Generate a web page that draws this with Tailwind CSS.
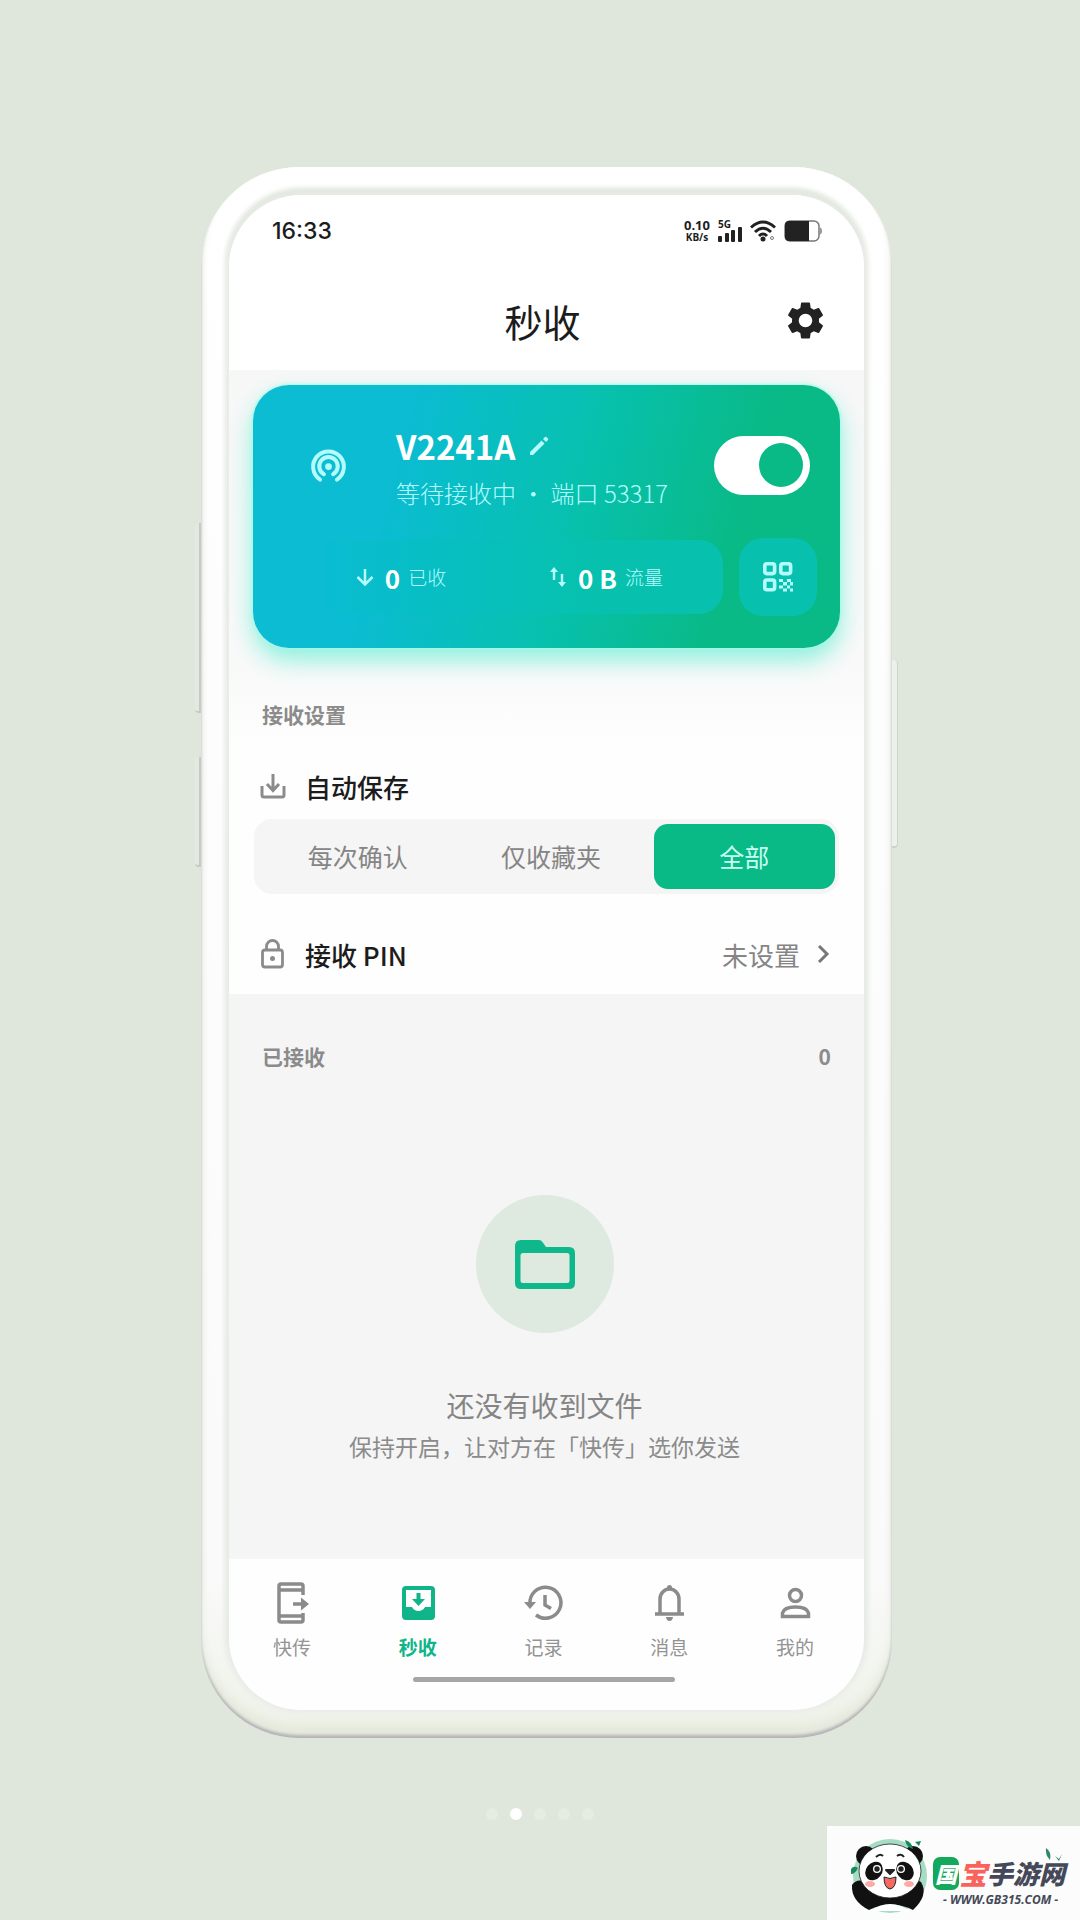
<!DOCTYPE html>
<html lang="zh-CN">
<head>
  <meta charset="UTF-8" />
  <meta name="viewport" content="width=device-width, initial-scale=1.0" />
  <title>秒收</title>
  <script src="https://cdn.jsdelivr.net/npm/@tailwindcss/browser@4"></script>
</head>
<body class="bg-[#dfe6dc] font-['Noto_Sans_CJK_SC',sans-serif] text-[#1c1c1c]">
  <div class="relative min-h-screen flex flex-col items-center pt-[167px] pl-[13px]">

    <!-- phone frame -->
    <div class="relative w-full max-w-[691px]">
      <div class="absolute -left-[6px] top-[356px] w-3 h-[190px] rounded-l bg-[#e3e9e1] border-b-2 border-r-8 border-[#c5cbc4]"></div>
      <div class="absolute -left-[6px] top-[590px] w-3 h-[110px] rounded-l bg-[#e3e9e1] border-b-2 border-r-8 border-[#c5cbc4]"></div>
      <div class="absolute -right-[6px] top-[493px] w-3 h-[188px] rounded-r bg-[#edf1eb] border-b-2 border-r border-[#cdd3cb]"></div>

      <div class="relative rounded-[98px] p-7 bg-linear-to-b from-white via-[#fafafa] via-90% to-[#edf1e6] shadow-[inset_0_-3px_3px_#b4b3b8,inset_0_-12px_10px_#e4e9dc,inset_0_2px_4px_#ffffff]">
        <div class="rounded-[72px] overflow-hidden bg-[#f5f5f5] shadow-[0_0_7px_2px_#ececec,0_-4px_5px_3px_#dde6d9]">

          <!-- status bar -->
          <header class="bg-white">
            <div class="flex items-center justify-between h-[81px] pb-[9px] pl-[43px] pr-[42px]">
              <span class="font-[Inter] font-medium text-[23px]">16:33</span>
              <div class="flex items-center gap-2 font-['Open_Sans',sans-serif] font-bold">
                <div class="text-center">
                  <div class="text-[13px] leading-[12px]">0.10</div>
                  <div class="text-[10px] leading-[12px]">KB/s</div>
                </div>
                <div class="flex flex-col">
                  <span class="text-[10px] leading-[8px]">5G</span>
                  <svg class="w-6 h-[15px] -mt-px" viewBox="0 7 24 15" fill="#222">
                    <rect x="0" y="16" width="4" height="6" rx="1" />
                    <rect x="7" y="13" width="4" height="9" rx="1" />
                    <rect x="13" y="10" width="4" height="12" rx="1" />
                    <rect x="20" y="7" width="4" height="15" rx="1" />
                  </svg>
                </div>
                <svg class="w-[26px] h-[22px]" viewBox="0 0 26 22" fill="none" stroke="#222" stroke-width="3">
                  <path d="M1 7.500Q13-3.500 25 7.500M5 12Q13 4.500 21 12M9 16Q13 12 17 16" />
                  <circle cx="13" cy="19" r="2.500" fill="#222" stroke="none" />
                  <circle cx="22" cy="18" r="1.500" stroke="#777" stroke-width="1" />
                </svg>
                <svg class="w-[38px] h-[22px]" viewBox="0 0 38 22">
                  <rect x="1" y="1" width="34" height="20" rx="5" fill="#fff" stroke="#777" stroke-width="1.500" />
                  <path d="M5 1H25V21H5Q1 21 1 17V5Q1 1 5 1Z" fill="#222" />
                  <path d="M36 8Q38 11 36 14" fill="none" stroke="#999" stroke-width="2" />
                </svg>
              </div>
            </div>

            <div class="grid grid-cols-[1fr_auto_1fr] items-center h-[94px] pl-7 pr-9 pb-[6px]">
              <span></span>
              <h1 class="text-[38px]">秒收</h1>
              <button aria-label="设置" class="justify-self-end">
                <svg class="size-[45px]" viewBox="0 0 24 24" fill="#222"><path d="M19.140 12.940c.04-.3.060-.61.060-.94 0-.32-.02-.64-.07-.94l2.030-1.580c.18-.14.230-.41.120-.61l-1.920-3.320c-.12-.22-.37-.29-.59-.22l-2.390.96c-.5-.38-1.030-.7-1.620-.94l-.36-2.540c-.04-.24-.24-.41-.48-.41h-3.840c-.24 0-.43.170-.47.410l-.36 2.540c-.59.240-1.130.570-1.620.940l-2.390-.96c-.22-.08-.47 0-.59.220L2.740 8.870c-.12.210-.08.470.120.610l2.030 1.580c-.05.3-.09.630-.09.940s.02.640.070.940l-2.030 1.580c-.18.140-.23.410-.12.610l1.920 3.320c.12.220.37.290.59.220l2.390-.96c.5.380 1.030.7 1.620.940l.36 2.540c.05.240.24.410.48.410h3.840c.24 0 .44-.17.470-.41l.36-2.540c.59-.24 1.130-.56 1.620-.94l2.390.96c.22.080.47 0 .59-.22l1.920-3.320c.12-.22.070-.47-.12-.61l-2.010-1.580zM12 15.600c-1.980 0-3.600-1.620-3.600-3.600s1.620-3.600 3.600-3.600 3.600 1.620 3.600 3.600-1.620 3.600-3.600 3.600z" /></svg>
              </button>
            </div>
          </header>

          <main>
            <div class="bg-linear-to-b from-[#f7f7f7] via-[#f9f9f9] via-80% to-[#fefefe] px-6 pt-[15px] pb-4">
              <!-- receiver card -->
              <section class="h-[263px] rounded-[36px] bg-linear-[105deg] from-[#0bbcd2] from-25% via-[#07c1ae] via-54% to-[#09b986] to-80% pt-[42px] pl-6 pr-[23px] text-white shadow-[0_0_3px_1px_#a5fbec,0_12px_24px_#8af0dc]">
                <div class="flex items-center h-[76px]">
                  <svg class="w-[103px] h-10" viewBox="-32 -1 64 26" fill="none" stroke="#b5fcff" stroke-width="2.600" stroke-linecap="round">
                    <path d="M-5.500 21.500A10 10 0 1 1 5.500 21.500M-3 18A6 6 0 1 1 3 18" />
                    <circle cx="0" cy="13" r="2.200" fill="#b5fcff" stroke="none" />
                  </svg>
                  <div class="flex-1 pl-4 pt-3">
                    <div class="flex items-center gap-3">
                      <h2 class="text-[33px] leading-[44px] font-bold">V2241A</h2>
                      <button aria-label="编辑名称">
                        <svg class="size-6" viewBox="0 0 24 24" fill="#b5fcff"><path d="M3 18V21h3L17.500 9.500 14.500 6.500zM16 5 19 8 21 6a1 1 0 0 0 0-1.400L19.400 3a1 1 0 0 0-1.400 0z" /></svg>
                      </button>
                    </div>
                    <p class="text-2xl leading-[50px] font-light text-[#b5fcff]">等待接收中 ・ 端口 53317</p>
                  </div>
                  <label class="shrink-0 mr-[7px]">
                    <input type="checkbox" checked aria-label="接收开关" class="peer sr-only" />
                    <span class="flex items-center w-24 h-[59px] rounded-full bg-white/40 p-[7px] peer-checked:bg-white peer-checked:justify-end">
                      <span class="size-11 rounded-full bg-[#09b986]"></span>
                    </span>
                  </label>
                </div>

                <div class="flex items-center gap-4 mt-[35px]">
                  <div class="flex-1 grid grid-cols-2 items-center h-[74px] rounded-3xl bg-linear-to-r from-[#0bbcd2] from-10% to-[#07c1ae] to-70% pl-5 pr-4">
                    <div class="flex items-center justify-center gap-2">
                      <svg class="size-6" viewBox="0 0 24 24" fill="none" stroke="#b5fcff" stroke-width="2.500"><path d="M12 4V19M4.500 12 12 19.500 19.500 12" /></svg>
                      <b class="text-[26px]">0</b>
                      <span class="text-[19px] font-light text-[#b5fcff]">已收</span>
                    </div>
                    <div class="flex items-center justify-center gap-2">
                      <svg class="size-6" viewBox="0 0 24 24" fill="#b5fcff"><path d="M8 2 12 7H9.200V15H6.800V7H4zM16 22 20 17H17.200V9H14.800V17H12z" /></svg>
                      <b class="text-[26px]">0 B</b>
                      <span class="text-[19px] font-light text-[#b5fcff]">流量</span>
                    </div>
                  </div>
                  <button aria-label="二维码" class="flex items-center justify-center size-[78px] rounded-3xl bg-[#07c1ae]">
                    <svg class="size-[30px]" viewBox="0 0 30 30" fill="none" stroke="#b5fcff" stroke-width="3.600">
                      <rect x="1.800" y="1.800" width="9.800" height="9.800" rx="2" />
                      <rect x="17.800" y="1.800" width="9.800" height="9.800" rx="2" />
                      <rect x="1.800" y="18" width="9.800" height="9.800" rx="2" />
                      <path stroke="none" fill="#b5fcff" d="M16 17h4v3h-4zM20 20h4v3.500h-4zM24 17h4v3h-4zM16 23.500h4v3h-4zM24 23.500h3v3h3v3h-3v-3h-3zM20 26.500h4v3h-4zM27 20h3v3.500h-3z" />
                    </svg>
                  </button>
                </div>
              </section>

              <h3 class="mt-[51px] pl-[9px] text-[21px] leading-[30px] font-bold text-[#8b8b8b]">接收设置</h3>
            </div>

            <!-- receive settings -->
            <section class="bg-[#fefefe] px-[25px]">
              <div class="flex items-center gap-[15px] h-[74px] pl-1 pt-2">
                <svg class="size-8" viewBox="0 0 32 32" fill="none" stroke="#8b8b8b" stroke-width="3"><path d="M4 16V25Q4 27 6 27H24Q26 27 26 25V16M15 4V20M9 14 15 20.500 21 14" /></svg>
                <h4 id="saveMode" class="text-[26px] font-medium">自动保存</h4>
              </div>
              <div role="radiogroup" aria-labelledby="saveMode" class="grid grid-cols-3 gap-3 rounded-[18px] bg-[#f5f5f5] py-[5px] pl-[13px] pr-1 text-center text-[25px] leading-[65px] text-[#858585]">
                <label>
                  <input type="radio" name="save" class="peer sr-only" />
                  <span class="block rounded-[14px] peer-checked:bg-[#09b986] peer-checked:text-[#c8fff2]">每次确认</span>
                </label>
                <label>
                  <input type="radio" name="save" class="peer sr-only" />
                  <span class="block rounded-[14px] peer-checked:bg-[#09b986] peer-checked:text-[#c8fff2]">仅收藏夹</span>
                </label>
                <label>
                  <input type="radio" name="save" checked class="peer sr-only" />
                  <span class="block rounded-[14px] peer-checked:bg-[#09b986] peer-checked:text-[#c8fff2]">全部</span>
                </label>
              </div>
              <button class="flex items-center w-full gap-[15px] h-[100px] pt-5 pl-1 pr-2">
                <svg class="size-8" viewBox="0 0 32 32" fill="none" stroke="#8b8b8b" stroke-width="2.800"><rect x="4.500" y="12" width="20" height="17" rx="2.500" /><path d="M8.500 12V8.500A6 6 0 0 1 20.500 8.500V12" /><circle cx="14.500" cy="20.500" r="2.500" fill="#8b8b8b" stroke="none" /></svg>
                <span class="text-[26px] font-medium">接收 PIN</span>
                <span class="ml-auto text-[26px] text-[#858585]">未设置</span>
                <svg class="w-4 h-6" viewBox="0 0 16 24" fill="none" stroke="#777" stroke-width="3"><path d="M4 4 12 12 4 20" /></svg>
              </button>
            </section>

            <!-- received files -->
            <section class="px-[33px]">
              <div class="flex items-center justify-between h-[126px] text-[21px] font-bold text-[#8b8b8b]">
                <h3>已接收</h3>
                <span>0</span>
              </div>
              <div class="flex flex-col items-center pt-[75px] pb-[92px] pr-1">
                <div class="flex items-center justify-center size-[138px] rounded-full bg-[#dee9e0]">
                  <svg class="w-[60px] h-[49px]" viewBox="0 0 60 49" fill="#0fb88a"><path fill-rule="evenodd" d="M6 0H24Q26 0 27.500 2L31 7H54Q60 7 60 13V43Q60 49 54 49H6Q0 49 0 43V6Q0 0 6 0ZM8 13Q5.500 13 5.500 15.500V40.500Q5.500 43 8 43H52Q54.500 43 54.500 40.500V15.500Q54.500 13 52 13Z" /></svg>
                </div>
                <p class="mt-[52px] text-[28px] leading-10 text-[#858585]">还没有收到文件</p>
                <p class="text-[23px] leading-[42px] text-[#8b8b8b]">保持开启，让对方在「快传」选你发送</p>
              </div>
            </section>
          </main>

          <!-- tab bar -->
          <footer class="bg-[#fefefe] pt-5 pb-7 pr-[6px]">
            <nav class="grid grid-cols-5 text-center text-[19px] leading-7 text-[#939393]">
              <a href="#" class="flex flex-col items-center gap-[6px]">
                <svg class="size-12" viewBox="0 0 48 48" fill="none" stroke="#8b8b8b" stroke-width="3.500"><path d="M35 16V7Q35 5 33 5H13Q11 5 11 7V41Q11 43 13 43H33Q35 43 35 41V34M11 11H35M11 37H35M25 25H37" /><path d="M33 18.500 41 25 33 31.500Z" fill="#8b8b8b" stroke="none" /></svg>
                <span>快传</span>
              </a>
              <a href="#" class="flex flex-col items-center gap-[6px] font-bold text-[#10b489]">
                <svg class="size-12" viewBox="0 0 48 48" fill="#10b489"><path fill-rule="evenodd" d="M12 7H37Q41 7 41 11V37Q41 41 37 41H12Q8 41 8 37V11Q8 7 12 7ZM12 11V28H18Q20 32 24.500 32T31 28H37V11ZM22.500 14H26.500V20H31L24.500 27 18 20H22.500Z" /></svg>
                <span>秒收</span>
              </a>
              <a href="#" class="flex flex-col items-center gap-[6px]">
                <svg class="size-12" viewBox="0 0 48 48" fill="none" stroke="#8b8b8b" stroke-width="3.500"><path d="M11 25A15.500 15.500 0 1 1 17 36M26 16V26L32 29.500" /><path d="M5 23H17L11 30Z" fill="#8b8b8b" stroke="none" /></svg>
                <span>记录</span>
              </a>
              <a href="#" class="flex flex-col items-center gap-[6px]">
                <svg class="size-12" viewBox="0 0 48 48" fill="none" stroke="#8b8b8b" stroke-width="3.500"><path d="M10 35H39M15 35V20A9.500 10 0 0 1 34 20V35" /><path d="M22 10V8.500A2.500 2.500 0 0 1 27 8.500V10ZM21 38H28Q27.500 42 24.500 42T21 38Z" fill="#8b8b8b" stroke="none" /></svg>
                <span>消息</span>
              </a>
              <a href="#" class="flex flex-col items-center gap-[6px]">
                <svg class="size-12" viewBox="0 0 48 48" fill="none" stroke="#8b8b8b" stroke-width="3.500"><circle cx="24.500" cy="16.500" r="6" /><path d="M11.500 37.500V34Q13 28 24.500 28T37.500 34V37.500Z" /></svg>
                <span>我的</span>
              </a>
            </nav>
            <div class="mx-auto mt-4 w-[262px] h-[5px] rounded-full bg-[#a6a6a6]"></div>
          </footer>
        </div>
      </div>
    </div>

    <!-- carousel dots -->
    <div class="flex gap-3 mt-[70px] pr-[13px]">
      <span class="size-3 rounded-full bg-[#e5ede3]"></span>
      <span class="size-3 rounded-full bg-white"></span>
      <span class="size-3 rounded-full bg-[#e5ede3]"></span>
      <span class="size-3 rounded-full bg-[#e5ede3]"></span>
      <span class="size-3 rounded-full bg-[#e5ede3]"></span>
    </div>

    <!-- site badge -->
    <a href="#" class="absolute right-0 bottom-0 flex items-center w-[253px] h-[94px] bg-[#fbfcfb] pl-5">
      <svg class="w-[82px] h-20 shrink-0" viewBox="0 0 82 80">
        <circle cx="43" cy="43" r="37" fill="#a5dcc4" />
        <path d="M5 52Q10 44 22 50L64 51Q66 43 74 49Q82 62 66 77Q44 66 22 77Q4 68 5 52Z" fill="#111" />
        <circle cx="19" cy="23" r="10" fill="#111" /><circle cx="66" cy="23" r="10" fill="#111" />
        <ellipse cx="43" cy="38" rx="31" ry="27" fill="#fff" stroke="#222" stroke-width=".8" />
        <path d="M23 78Q43 64 63 78Z" fill="#fff" />
        <ellipse cx="27" cy="38" rx="8" ry="10" fill="#111" transform="rotate(38 27 38)" />
        <ellipse cx="58" cy="38" rx="8" ry="10" fill="#111" transform="rotate(-38 58 38)" />
        <circle cx="30" cy="36" r="4" fill="#fff" /><circle cx="54" cy="36" r="4" fill="#fff" />
        <circle cx="30" cy="36" r="2.700" fill="#222" /><circle cx="54" cy="36" r="2.700" fill="#222" />
        <path d="M39 37H47L43 41Z" fill="#222" stroke="#222" stroke-width="2" stroke-linejoin="round" />
        <path d="M37 44Q43 47 49 44Q49 55 43 56Q37 55 37 44Z" fill="#f26a60" stroke="#222" stroke-width="1" />
        <ellipse cx="23" cy="51" rx="5" ry="3" fill="#ffa9a2" /><ellipse cx="62" cy="51" rx="5" ry="3" fill="#ffa9a2" />
        <path d="M29 24Q33 20 36 23M50 23Q54 20 57 24" fill="none" stroke="#222" stroke-width="2" />
        <path d="M58 7Q65 9 66 16Q59 14 58 7ZM4 36Q7 32 11 35Q8 41 4 41ZM68 9 72 13 74 8Z" fill="#17895c" />
      </svg>
      <svg class="absolute right-4 top-5 w-5 h-4" viewBox="0 0 20 16"><path d="M2 2Q8 6 6 14Q1 9 2 2ZM11 10 15 13 18 8 15 15Z" fill="#2b8a65" /></svg>
      <div class="pl-1 pt-[18px]">
        <div class="flex items-center h-9 text-[26px] leading-9 font-black italic text-[#454858] whitespace-nowrap">
          <span class="w-[26px] rounded-[7px] bg-[#12a95c] text-center text-[22px] leading-[33px] text-white">国</span>
          <span class="text-[28px] text-[#f9635b]">宝</span>
          <span>手游网</span>
        </div>
        <div class="pl-[10px] font-['Open_Sans',sans-serif] text-[12px] leading-[18px] font-bold italic text-[#454858]">- WWW.GB315.COM -</div>
      </div>
    </a>
  </div>
</body>
</html>
